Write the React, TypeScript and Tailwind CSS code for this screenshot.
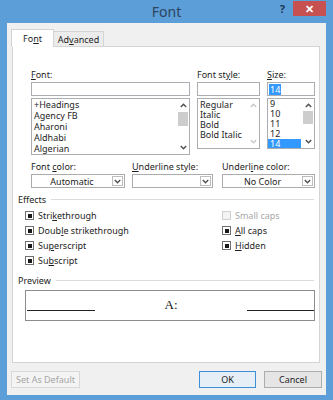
import type { ReactNode } from 'react'

const ui = { fontFamily: '"Noto Sans", "Open Sans", Arial, sans-serif' }

function Key({ children }: { children: ReactNode }) {
  return <span className="underline underline-offset-1">{children}</span>
}

function Chevron({ up, faint }: { up?: boolean; faint?: boolean }) {
  return (
    <svg width="7" height="5" viewBox="0 0 7 5" className={faint ? 'text-[#c8c8c8]' : 'text-[#505050]'}>
      <polyline
        points={up ? '0.8,4 3.5,1.2 6.2,4' : '0.8,1 3.5,3.8 6.2,1'}
        fill="none"
        stroke="currentColor"
        strokeWidth="1.4"
      />
    </svg>
  )
}

function Scroll({ thumbTop, thumbH, faint }: { thumbTop: number; thumbH: number; faint?: boolean }) {
  return (
    <div className="flex w-[12px] flex-col items-center py-[4px]">
      <Chevron up faint={faint} />
      <div className="flex w-full flex-1 flex-col">
        {faint ? null : (
          <div className="mx-[1px] bg-[#cdcdcd]" style={{ marginTop: thumbTop, height: thumbH }} />
        )}
      </div>
      <Chevron faint={faint} />
    </div>
  )
}

function Check({ disabled }: { disabled?: boolean }) {
  return (
    <span
      className={
        disabled
          ? 'flex h-[9px] w-[9px] items-center justify-center border border-[#d0d0d0] bg-[#f4f4f4]'
          : 'flex h-[9px] w-[9px] items-center justify-center border border-[#707070] bg-white'
      }
    >
      {disabled ? null : <span className="h-[4px] w-[4px] bg-[#1a1a1a]" />}
    </span>
  )
}

function Combo({ value, width }: { value: string; width: number }) {
  return (
    <div className="flex h-[14px] border border-[#acacac] bg-white" style={{ width }}>
      <div className="flex flex-1 items-center justify-center leading-none text-[#222]">{value}</div>
      <div className="my-[1px] mr-[1px] flex w-[11px] items-center justify-center border border-[#bdbdbd]">
        <Chevron />
      </div>
    </div>
  )
}

function CheckRow({ label, disabled }: { label: ReactNode; disabled?: boolean }) {
  return (
    <div className={disabled ? 'flex h-[15px] items-center gap-[4px] text-[#a8a8a8]' : 'flex h-[15px] items-center gap-[4px]'}>
      <Check disabled={disabled} />
      <span>{label}</span>
    </div>
  )
}

export default function App() {
  return (
    <div className="flex h-[400px] w-[333px] flex-col bg-[#5c9ed8] text-[9px] text-[#1e1e1e]" style={ui}>
      <div className="grid h-[23px] grid-cols-[1fr_auto_1fr]">
        <div />
        <div className="pt-[3px] text-[14px] leading-[18px] text-[#2d4360]">Font</div>
        <div className="flex items-start justify-end pr-[7px]">
          <span className="mt-[3px] text-[11px] font-bold leading-[12px] text-[#203652]">?</span>
          <div className="ml-[8px] mt-[1px] flex h-[15px] w-[33px] items-center justify-center bg-[#c75050] text-[11px] font-bold leading-none text-white">
            ✕
          </div>
        </div>
      </div>

      <div className="mx-[7px] flex h-[372px] flex-col bg-[#f0f0f0]">
        <div className="mt-[6px] flex items-end pl-[4px] leading-none">
          <div className="relative z-10 -mb-px flex h-[18px] w-[43px] items-center justify-center border border-b-0 border-[#d4d4d4] bg-white">
            <span>
              Fo<Key>n</Key>t
            </span>
          </div>
          <div className="flex h-[15px] w-[50px] items-center justify-center border border-l-0 border-b-0 border-[#d4d4d4] bg-[#ececec]">
            <span>
              Ad<Key>v</Key>anced
            </span>
          </div>
        </div>

        <div className="ml-[5px] flex h-[317px] w-[308px] flex-col border border-[#d4d4d4] bg-white leading-[11px]">
          <div className="flex items-start gap-[7px] pl-[18px] pt-[22px]">
            <div className="flex w-[159px] flex-col">
              <div className="h-[11px]">
                <Key>F</Key>ont:
              </div>
              <div className="mt-[2px] h-[14px] border border-[#abadb3] bg-white" />
              <div className="mt-[2px] flex h-[57px] border border-[#abadb3] bg-white">
                <div className="flex flex-1 flex-col overflow-hidden pl-[2px]">
                  <span>+Headings</span>
                  <span>Agency FB</span>
                  <span>Aharoni</span>
                  <span>Aldhabi</span>
                  <span>Algerian</span>
                </div>
                <Scroll thumbTop={4} thumbH={14} />
              </div>
            </div>
            <div className="flex w-[63px] flex-col">
              <div className="h-[11px]">
                Font st<Key>y</Key>le:
              </div>
              <div className="mt-[2px] h-[14px] border border-[#abadb3] bg-white" />
              <div className="mt-[2px] flex h-[51px] border border-[#abadb3] bg-white leading-[10px]">
                <div className="flex flex-1 flex-col overflow-hidden pl-[2px] pt-[1px]">
                  <span>Regular</span>
                  <span>Italic</span>
                  <span>Bold</span>
                  <span>Bold Italic</span>
                </div>
                <Scroll thumbTop={0} thumbH={0} faint />
              </div>
            </div>
            <div className="flex w-[48px] flex-col">
              <div className="h-[11px]">
                <Key>S</Key>ize:
              </div>
              <div className="mt-[2px] flex h-[14px] items-center border border-[#abadb3] bg-white pl-[1px]">
                <span className="bg-[#3399ff] px-[1px] text-white">14</span>
              </div>
              <div className="mt-[2px] flex h-[51px] border border-[#abadb3] bg-white leading-[10px]">
                <div className="flex flex-1 flex-col">
                  <span className="pl-[2px]">9</span>
                  <span className="pl-[2px]">10</span>
                  <span className="pl-[2px]">11</span>
                  <span className="pl-[2px]">12</span>
                  <span className="mr-[1px] h-[9px] bg-[#3399ff] pl-[2px] leading-[9px] text-white">14</span>
                </div>
                <Scroll thumbTop={3} thumbH={13} />
              </div>
            </div>
          </div>

          <div className="mt-[6px] flex items-start pl-[18px]">
            <div className="flex flex-col">
              <div className="h-[11px]">
                Font <Key>c</Key>olor:
              </div>
              <div className="mt-[2px]">
                <Combo value="Automatic" width={94} />
              </div>
            </div>
            <div className="ml-[7px] flex flex-col">
              <div className="h-[11px]">
                <Key>U</Key>nderline style:
              </div>
              <div className="mt-[2px]">
                <Combo value="" width={81} />
              </div>
            </div>
            <div className="ml-[9px] flex flex-col">
              <div className="h-[11px]">
                Underl<Key>i</Key>ne color:
              </div>
              <div className="mt-[2px]">
                <Combo value="No Color" width={93} />
              </div>
            </div>
          </div>

          <div className="mt-[6px] flex items-center gap-[5px] pl-[5px] pr-[5px]">
            <span>Effects</span>
            <div className="h-px flex-1 bg-[#dcdcdc]" />
          </div>

          <div className="mt-[3px] grid grid-cols-[197px_1fr] pl-[12px]">
            <div className="flex flex-col">
              <CheckRow
                label={
                  <>
                    Stri<Key>k</Key>ethrough
                  </>
                }
              />
              <CheckRow
                label={
                  <>
                    Doub<Key>l</Key>e strikethrough
                  </>
                }
              />
              <CheckRow
                label={
                  <>
                    Su<Key>p</Key>erscript
                  </>
                }
              />
              <CheckRow
                label={
                  <>
                    Su<Key>b</Key>script
                  </>
                }
              />
            </div>
            <div className="flex flex-col">
              <CheckRow label="Small caps" disabled />
              <CheckRow
                label={
                  <>
                    <Key>A</Key>ll caps
                  </>
                }
              />
              <CheckRow
                label={
                  <>
                    <Key>H</Key>idden
                  </>
                }
              />
            </div>
          </div>

          <div className="mt-[7px] flex items-center gap-[5px] pl-[5px] pr-[5px]">
            <span>Preview</span>
            <div className="h-px flex-1 bg-[#dcdcdc]" />
          </div>

          <div className="ml-[12px] mt-[4px] flex h-[31px] w-[290px] items-end border border-[#8c8c8c] bg-white pb-[9px]">
            <div className="ml-[1px] h-px w-[68px] bg-[#222]" />
            <div
              className="flex-1 text-center text-[13px] leading-[13px] text-[#111]"
              style={{ fontFamily: '"Liberation Serif", "Times New Roman", serif' }}
            >
              A:
            </div>
            <div className="h-px w-[67px] bg-[#222]" />
          </div>
        </div>

        <div className="mt-[8px] flex h-[17px] items-stretch pl-[4px] pr-[4px] leading-none">
          <div className="flex w-[69px] items-center justify-center border border-[#d9d9d9] bg-[#f4f4f4] text-[#a6a6a6]">
            Set As Default
          </div>
          <div className="flex-1" />
          <div className="flex w-[57px] items-center justify-center border border-[#3c8fd8] bg-[#e6eef6]">OK</div>
          <div className="ml-[8px] flex w-[58px] items-center justify-center border border-[#adadad] bg-[#e5e5e5]">
            Cancel
          </div>
        </div>
      </div>
    </div>
  )
}
